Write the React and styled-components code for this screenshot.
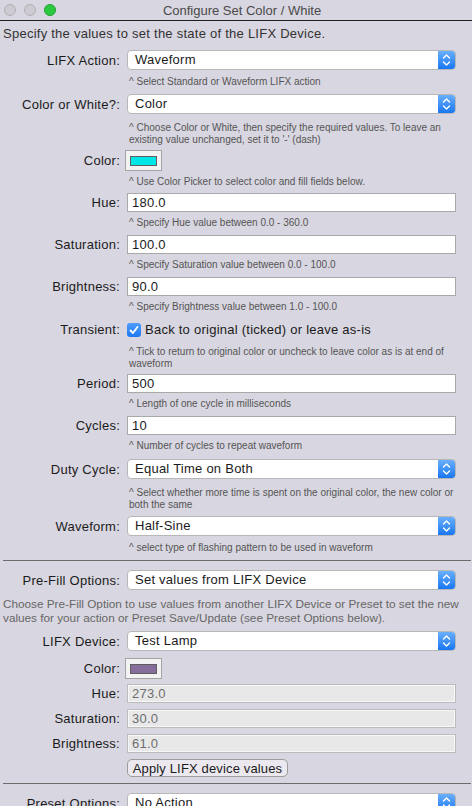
import React from 'react';
import styled, { createGlobalStyle } from 'styled-components';

const GlobalStyle = createGlobalStyle`
  html, body {
    margin: 0;
    padding: 0;
    background: #d8d6e0;
  }
  body {
    font-family: "Liberation Sans", Arial, sans-serif;
    color: #1b1b1b;
  }
`;

const Window = styled.div`
  width: 472px;
  height: 806px;
  overflow: hidden;
  background: #d8d6e0;
`;

const TitleBar = styled.div`
  display: flex;
  align-items: center;
  height: 20px;
  border-bottom: 1px solid #1e1e1e;
`;

const Lights = styled.div`
  display: flex;
  gap: 8px;
  padding-left: 4px;
  width: 52px;
`;

const Light = styled.span`
  width: 12px;
  height: 12px;
  border-radius: 50%;
  box-sizing: border-box;
  background: ${(p) => (p.$on ? '#2bc840' : '#cdcbd1')};
  border: 1px solid ${(p) => (p.$on ? '#1ea531' : '#b2b0b6')};
`;

const Title = styled.div`
  flex: 1;
  text-align: center;
  padding-right: 44px;
  font-size: 13px;
  color: #4a4a4a;
`;

const Intro = styled.p`
  margin: 5px 0 8px 3px;
  font-size: 13px;
  letter-spacing: 0.25px;
  line-height: 16px;
  color: #333;
`;

const Row = styled.div`
  display: grid;
  grid-template-columns: 120px 1fr;
  column-gap: 7px;
  align-items: center;
  padding-right: 16px;
  margin-top: ${(p) => p.$top || 0}px;
`;

const Label = styled.label`
  text-align: right;
  font-size: 13px;
  letter-spacing: 0.25px;
  white-space: nowrap;
`;

const Hint = styled.div`
  margin: ${(p) => (p.$top ?? 5)}px 0 ${(p) => (p.$bottom ?? 6)}px 129px;
  font-size: 10px;
  line-height: 12px;
  color: #555;
  white-space: nowrap;
`;

const Note = styled.p`
  margin: 7px 0 6px 3px;
  font-size: 11.75px;
  line-height: 14px;
  color: #666;
  white-space: nowrap;
`;

const SelectBox = styled.div`
  display: flex;
  height: 20px;
  box-sizing: border-box;
  border: 1px solid #b7b7b7;
  border-radius: 4px;
  background: #fff;
  overflow: hidden;
`;

const SelectText = styled.span`
  flex: 1;
  padding-left: 7px;
  font-size: 13px;
  letter-spacing: 0.25px;
  line-height: 18px;
  white-space: nowrap;
`;

const Stepper = styled.span`
  display: flex;
  align-items: center;
  justify-content: center;
  width: 17px;
  background: linear-gradient(#69affc, #1a77f2);
`;

const TextField = styled.input`
  display: block;
  width: 100%;
  height: 19px;
  box-sizing: border-box;
  margin: 0;
  padding: 0 4px;
  border: 1px solid ${(p) => (p.$off ? '#bcbcbc' : '#a9a9a9')};
  border-radius: 0;
  background: ${(p) => (p.$off ? '#e8e8e8' : '#fff')};
  box-shadow: ${(p) => (p.$off ? 'inset 0 0 0 1px #f7f7f7' : 'none')};
  font: inherit;
  font-size: 13px;
  letter-spacing: 0.25px;
  color: ${(p) => (p.$off ? '#6e6e6e' : '#1b1b1b')};
  outline: none;
`;

const Well = styled.div`
  display: flex;
  align-items: center;
  justify-content: center;
  justify-self: start;
  width: 37px;
  height: 21px;
  box-sizing: border-box;
  margin-left: -2px;
  border: 1px solid #a4a4a4;
  background: #f3f3f3;
`;

const WellColor = styled.div`
  width: 27px;
  height: 10px;
  box-sizing: border-box;
  border: 1px solid #5e5e5e;
  background: ${(p) => p.$color};
`;

const CheckLine = styled.div`
  display: flex;
  align-items: center;
  gap: 4px;
  height: 21px;
  font-size: 13px;
  letter-spacing: 0.25px;
  white-space: nowrap;
`;

const Box = styled.span`
  display: flex;
  align-items: center;
  justify-content: center;
  width: 14px;
  height: 14px;
  border-radius: 3px;
  background: linear-gradient(#4e9dfb, #1e78f1);
`;

const Separator = styled.hr`
  margin: ${(p) => p.$top || 0}px 1px 9px 3px;
  border: none;
  height: 1px;
  background: #6c6c6c;
`;

const PushButton = styled.button`
  justify-self: start;
  width: 161px;
  height: 18px;
  box-sizing: border-box;
  padding: 0;
  border: 1px solid #9c9c9c;
  border-radius: 5px;
  background: #ebe9ef;
  font: inherit;
  font-size: 13px;
  letter-spacing: 0.15px;
  color: #1b1b1b;
`;

const Select = ({ value }) => (
  <SelectBox>
    <SelectText>{value}</SelectText>
    <Stepper>
      <svg width="17" height="18" viewBox="0 0 17 18">
        <path d="M5.5 7 L8.5 4 L11.5 7 M5.5 11 L8.5 14 L11.5 11" fill="none" stroke="#fff" strokeWidth="1.4" strokeLinecap="round" strokeLinejoin="round" />
      </svg>
    </Stepper>
  </SelectBox>
);

const App = () => (
  <Window>
    <GlobalStyle />
    <TitleBar>
      <Lights>
        <Light />
        <Light />
        <Light $on />
      </Lights>
      <Title>Configure Set Color / White</Title>
    </TitleBar>

    <Intro>Specify the values to set the state of the LIFX Device.</Intro>

    <Row>
      <Label>LIFX Action:</Label>
      <Select value="Waveform" />
    </Row>
    <Hint $top={6}>^ Select Standard or Waveform LIFX action</Hint>

    <Row>
      <Label>Color or White?:</Label>
      <Select value="Color" />
    </Row>
    <Hint $top={8} $bottom={4}>
      ^ Choose Color or White, then specify the required values. To leave an<br />
      existing value unchanged, set it to '-' (dash)
    </Hint>

    <Row>
      <Label>Color:</Label>
      <Well><WellColor $color="#00e6e6" /></Well>
    </Row>
    <Hint $bottom={5}>^ Use Color Picker to select color and fill fields below.</Hint>

    <Row>
      <Label>Hue:</Label>
      <TextField readOnly value="180.0" />
    </Row>
    <Hint>^ Specify Hue value between 0.0 - 360.0</Hint>

    <Row>
      <Label>Saturation:</Label>
      <TextField readOnly value="100.0" />
    </Row>
    <Hint>^ Specify Saturation value between 0.0 - 100.0</Hint>

    <Row>
      <Label>Brightness:</Label>
      <TextField readOnly value="90.0" />
    </Row>
    <Hint>^ Specify Brightness value between 1.0 - 100.0</Hint>

    <Row>
      <Label>Transient:</Label>
      <CheckLine>
        <Box>
          <svg width="12" height="12" viewBox="0 0 12 12">
            <path d="M2.5 6.5 L5 9 L9.5 3" fill="none" stroke="#fff" strokeWidth="1.8" strokeLinecap="round" strokeLinejoin="round" />
          </svg>
        </Box>
        Back to original (ticked) or leave as-is
      </CheckLine>
    </Row>
    <Hint $top={6} $bottom={4}>
      ^ Tick to return to original color or uncheck to leave color as is at end of<br />
      waveform
    </Hint>

    <Row>
      <Label>Period:</Label>
      <TextField readOnly value="500" />
    </Row>
    <Hint>^ Length of one cycle in milliseconds</Hint>

    <Row>
      <Label>Cycles:</Label>
      <TextField readOnly value="10" />
    </Row>
    <Hint $bottom={7}>^ Number of cycles to repeat waveform</Hint>

    <Row>
      <Label>Duty Cycle:</Label>
      <Select value="Equal Time on Both" />
    </Row>
    <Hint $top={8} $bottom={5}>
      ^ Select whether more time is spent on the original color, the new color or<br />
      both the same
    </Hint>

    <Row>
      <Label>Waveform:</Label>
      <Select value="Half-Sine" />
    </Row>
    <Hint $top={6}>^ select type of flashing pattern to be used in waveform</Hint>

    <Separator />

    <Row>
      <Label>Pre-Fill Options:</Label>
      <Select value="Set values from LIFX Device" />
    </Row>
    <Note>
      Choose Pre-Fill Option to use values from another LIFX Device or Preset to set the new<br />
      values for your action or Preset Save/Update (see Preset Options below).
    </Note>

    <Row>
      <Label>LIFX Device:</Label>
      <Select value="Test Lamp" />
    </Row>
    <Row $top={7}>
      <Label>Color:</Label>
      <Well><WellColor $color="#876d9c" /></Well>
    </Row>
    <Row $top={5}>
      <Label>Hue:</Label>
      <TextField $off readOnly value="273.0" />
    </Row>
    <Row $top={6}>
      <Label>Saturation:</Label>
      <TextField $off readOnly value="30.0" />
    </Row>
    <Row $top={6}>
      <Label>Brightness:</Label>
      <TextField $off readOnly value="61.0" />
    </Row>
    <Row $top={6}>
      <span />
      <PushButton>Apply LIFX device values</PushButton>
    </Row>

    <Separator $top={6} />

    <Row>
      <Label>Preset Options:</Label>
      <Select value="No Action" />
    </Row>
  </Window>
);

export default App;
